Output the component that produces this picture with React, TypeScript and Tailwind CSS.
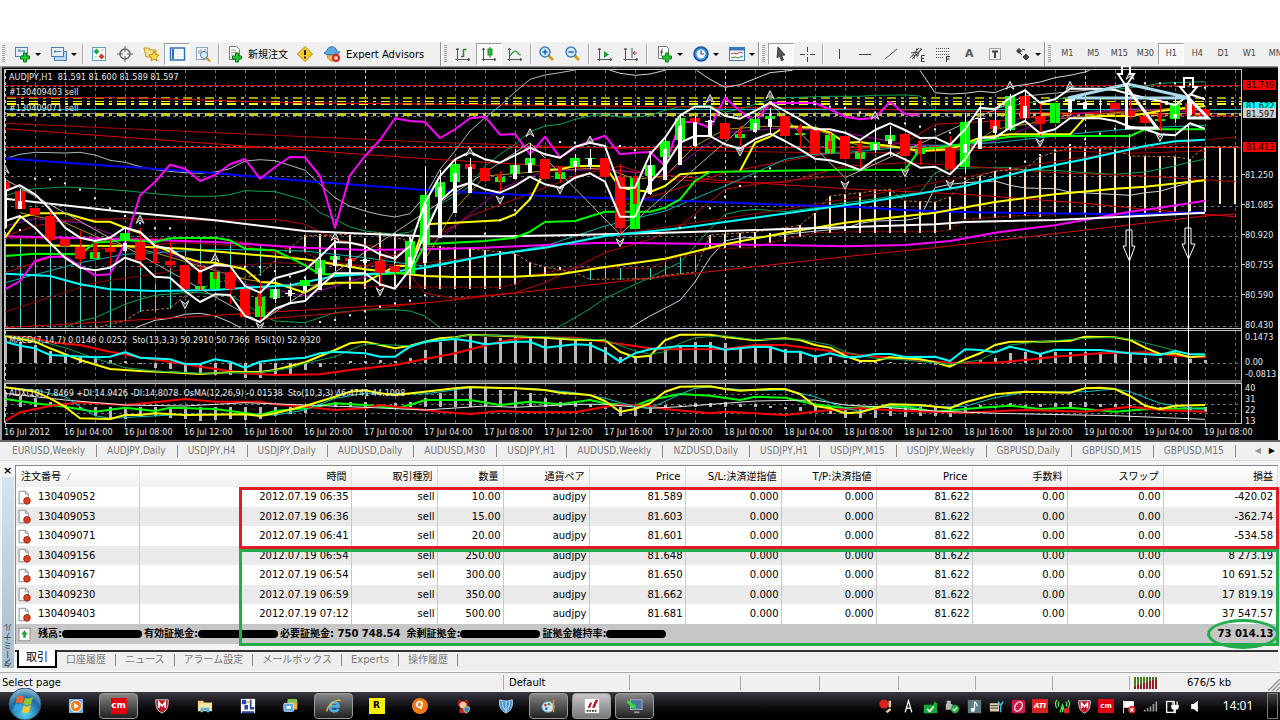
import type { ReactNode } from "react";
import { clsx } from "clsx";

const UI_FONT = "font-['DejaVu_Sans','Noto_Sans_CJK_JP',sans-serif]";
const CHART_FONT = "font-['DejaVu_Sans_Condensed','DejaVu_Sans',sans-serif]";

/* ---------- chart data: "bar,level" pairs, levels in thirds of a pixel ---------- */

const barX = (i: number) => 5 + 15 * i;

function toPoints(data: string) {
  return data
    .trim()
    .split(/\s+/)
    .map((pair) => {
      const [i, y] = pair.split(",").map(Number);
      return `${barX(i).toFixed(1)},${(y / 3).toFixed(1)}`;
    })
    .join(" ");
}

type Series = { c: string; w?: number; dash?: string; d: string };

const BACK_SERIES: Series[] = [
  { c: "#a9bcbc", d: "0.3,274 1,265 2,259 4,261 5,259 6,267 7,283 8,289 9,302 10,311 11,316 12,320 13,322 14,318 15,308 16,285 17,281 18,284 19,298 20,313 21,355 22,395 23,421 24,435 25,446 26,453 27,443 28,390 29,310 30,255 31,195 32,155 33,120 34,78 35,40 36,27 37,20 38,12" },
  { c: "#c9d8d8", d: "40.3,12 41,22 42,28 43,24 44,13" },
  { c: "#c9d8d8", d: "46.1,13 47,40 48,64 49,56 50,38 51,20 52.5,13" },
  { c: "#c9d8d8", d: "61,13 62,80 63,84 64,82 65,76 66,80 67,62 68,56 69,48 70,35 71,28 72,18 72.3,13" },
  { c: "#c9d8d8", d: "8.7,785 10,763 11,757 12,745 13,742 14,750 15,768 15.7,785" },
  { c: "#c9d8d8", d: "41.7,785 43,750 44,727 45,703 46,648 47,575 48,525 49,516 50,514 51,510 53,500 56,487 57,472 58,465 60,463 61,455 62,365 63,355 64,350 66,345 67,358 68,366 70,368 71,378 73,383 75,388 76,380 77,376 78,362 79,350 80,340" },
  { c: "#00a651", d: "0,390 1,375 2,368 4,363 6,368 8,374 10,383 12,391 14,391 15,386 16,374 18,377 20,402 21,440 22,460 23,483 24,495 25,500 26,505 27,498 28,470 29,415 30,390 31,360 32,300 33,265 34,235 35,197 36,180 37,175 38,160 39,150 40,145 41,153 42,153 43,148 44,133 45,122 46,120 47,118 48,138 49,130 50,115 51,100 52,95 55,91 57,91 58,88 60,87 61,90 62,130 63,133 65,131 67,120 68,112 70,100 71,95 73,75 75,65 76,60 77,52 78,50 80,47" },
  { c: "#00a651", d: "4,785 5,765 6,755 7,735 8,715 9,700 10,688 12,680 13,680 15,690 16,712 17,745 18,765 20,770 21,755 22,740 24,732 26,731 27,735 28,750 29,785" },
  { c: "#00a651", d: "36.8,785 38,755 39,728 40,697 42,655 43,635 44,610 45,590 46,540 47,490 48,445 49,435 50,430 52,437 54,425 56,410 57,405 60,385 61,380 62,320 63,308 65,305 67,305 68,312 70,313 72,320 74,325 76,318 78,300 79,288 80,280" },
  { c: "#b00000", d: "0,172 28,228 36,240 44,252 56,262 68,250 75,262 80,255" },
  { c: "#e00000", d: "0,188 16,240 28,278 40,310 48,345 56,368 64,385 72,412 76,430 82,452" },
  { c: "#e00000", d: "0,93 9,96 19,110 36,118 56,128 61,133 70,140 82,150" },
  { c: "#e00000", d: "0,785 28,711 56,572 62,545 80,450 82,444" },
  { c: "#900000", d: "0,738 6,650 12,610 18,590 24,600 28,590 34,560 40,510 46,470 52,430 57,392 62,350 68,300 74,260 80,222 82,213" },
  { c: "#c00000", d: "0,620 3,575 5,557 8,540 12,530 16,540 20,580 24,600 28,530 31,450 34,400 38,330 41,300 44,340 48,350 52,350 56,300 60,290 64,300 70,320 76,330 82,347" },
  { c: "#c00000", d: "0,510 2,480 4,462 8,458 14,463 18,460 20,475 22,520 25,545 26.500,600 28,682 30,697 34,680 36,650 40,560 43,520 45,480 48,370 50,355 54,335 56,330" },
  { c: "#d00000", d: "17,760 22,742 28,710" },
  { c: "#d00000", d: "41,420 44,380 48,320 52,285 55,262 60,230 62,175 66,165 72,140 78,130 80,135" },
  { c: "#d00000", dash: "3 2", d: "0,517 8,517 14,518 18,540 20,560 22,600 24,662 33,664 34,655 35,628 37,612 38,605 43,607 44,585 45,572 46,565 47,548 50,545 51,530 54,500 57,497 62,497 63,492 64,460 67,450 70,446" },
  { c: "#c87830", dash: "3 2", d: "6,785 8,765 9,735 11,727 12,690 14,650 17,625 19,545 20,510 22,507 25,500 28,540 32,553 34,563 35,590 36,603 38,620 39,640 43,638 44,628 46,618 47,507 50,498 53,478 54,440 55,390 57,380 59,370 60,405 62,408 63,392 64,345 66,315 68,310 69,272 71,245 74,250 75,270 78,272 79,280 80,243 82,243" },
  { c: "#b89000", d: "1,440 4,470 7,530 10,560 13,600 16,640 19,660 22,655" },
  { c: "#b89000", d: "28,580 30,430 32,330 36,315 40,305 42,340 44,330 46,240 48,190 51,180 54,190 57,240 60,245 64,250 66,190 70,160 74,140 80,120" },
  { c: "#a000a0", d: "0,480 2,458 5,470 8,520 12,580 14,610 16,655 18,672 20,690 23,645 26,610 28,555 30,480 33,370 36,315 40,310 44,328 46,260 48,200 52,185 56,200 60,235 64,240 66,225 69,170 72,140 75,128 80,140" },
  { c: "#00b4b4", d: "0,650 5,590 8,565 14,550 20,555 24,575 27,595 28,600 36,540 40,480 44,435 48,360 50,320 52,280 54,265 56,260 60,243 66,230 72,200 76,185 80,178" },
];

const FRONT_SERIES: Series[] = [
  { c: "#0000ff", w: 2, d: "0,277 4,290 8,302 13,318 20,345 28,372 36,390 44,403 53,418 57,424 60,432 63,437 68,441 75,445 80,438" },
  { c: "#ff00ff", w: 2, d: "0,511 8,520 14,528 20,545 24,552 28,550 32,545 37,535 40,530 46,533 56,541 60,537 63,525 66,500 70,478 75,437 77,425 80,404" },
  { c: "#ffff00", w: 2, d: "0,538 8,540 12,548 20,580 24,610 28,630 30,633 34,632 37,625 40,603 44,578 48,535 52,500 56,470 62,440 66,408 70,385 74,368 76,362 80,343" },
  { c: "#ffffff", w: 2, d: "0,398 8,438 14,463 20,495 24,503 28,511 33,511 38,507 44,500 50,492 57,482 62,475 64,468 70,462 76,449 80,440" },
  { c: "#ffff00", w: 2, d: "0,515 1,455 2,442 4,442 6,467 7,467 8,485 9,500 10,538 12,575 13,588 14,590 16,610 17,648 18,650 20,680 21,655 22,650 24,650 26,600 27,600 28,475 30,470 33,463 34,445 35,400 36,312 37,310 38,300 40,300 41,365 43,378 44,360 45,325 47,318" },
  { c: "#ffff00", w: 2, d: "49,315 50,230 51,212 52,180 54,185 55,200 56,230 57,228 58,235 59,240 61,255 63,250 65,215 67,205 71,205 72,155 73,150 75,150 77,135 80,120" },
  { c: "#00ff00", w: 2, d: "0,570 2,563 5,565 6,530 8,522 10,528 11,517 14,515 15,523 16,548 18,553 19,575 20,598 21,625 25,625 27,620 28,535 32,525 34,515 35,497 36,468 38,465 40,437 43,437 44,425 45,400 46,345 47,318 56,311 60,312 61,250 63,240 65,225 67,212 69,210 75,210 76,190 80,190" },
  { c: "#00ffff", w: 2, d: "0,623 3,630 5,655 7,670 10,675 14,672 16,665 19,658 22,630 25,622 28,605 32,570 36,545 40,510 45,487 50,455 54,430 57,412 60,390 64,360 68,315 72,280 76,240 78,226 80,221" },
  { c: "#ff00ff", w: 2, d: "0,670 1,645 2,585 3,572 4,572 5,600 6,628 7,625 8,530 9,388 10,348 11,296 12,308 13,345 14,327 15,295 16,279 17,338 18,303 19,273 20,274 21,330 22,485 23,328 24,270 25,222 26,157 27,165 28,168 29,216 30,190 31,157 32,152 33,206 34,204 35,265 36,212 37,275 38,245 39,225 40,209 41,265 42,260 43,258 44,300 45,168 46,168 47,185 48,95 49,135 50,170 51,110 54,111 55,130 56,152 57,160 58,155 59,107 60,145 61,146" },
  { c: "#b8b0a8", d: "0,340 17,768 35,230 41,505 51,110 56,335 68,90 75,60" },
];

const BAND_SERIES: Series[] = [
  { c: "#ffffff", w: 2, d: "0,375 1,358 2,385 3,430 4,485 5,515 6,525 7,515 8,485 9,497 10,540 11,548 12,580 13,617 14,597 15,600 16,660 17,680 18,637 19,625 20,612 21,572 22,528 23,530 24,540 25,565 26,578 27,540 28,410 29,330 30,280 31,258 32,280 33,290 34,268 35,245 36,265 37,275 38,242 39,230 40,240 41,365 42,365 43,265 44,215 45,148 46,122 47,122 48,150 49,158 50,135 51,110 52,135 53,160 54,190 55,190 56,200 57,222 58,192 59,172 60,192 61,216 62,215 63,236 64,190 65,125 66,130 67,95 68,73 69,110 70,100 71,68 73,68 74,72 75,85 76,95 77,105 78,118 79,85 80,100" },
  { c: "#ffffff", w: 2, d: "0,465 1,450 2,485 4,575 5,605 6,613 7,605 8,575 9,590 10,632 11,635 12,675 13,708 14,685 15,687 16,750 17,768 18,728 19,712 20,705 21,662 22,622 24,622 25,655 26,668 27,610 28,500 29,405 30,365 31,350 32,370 33,380 34,360 35,332 36,355 37,365 38,335 39,322 40,347 41,452 42,452 43,350 44,300 45,230 46,210 47,210 48,235 49,248 50,220 51,203 52,225 53,250 54,278 55,283 56,295 57,312 58,280 59,260 60,280 61,305 62,302 63,325 64,280 65,215 66,215 67,185 68,165 69,202 70,190 71,157 73,157 74,165 75,182 76,190 77,205 78,208 79,172 80,188" },
];

const SUB_SERIES: Series[] = [
  { c: "#ff0000", w: 2, d: "0,32 2,40 3,52 5,60 7,80 9,97 11,110 13,125 15,138 16,145 18,150 21,148 23,135 26,120 28,102 30,85 33,50 35,36 38,38 40,50 43,70 44,73 48,72 50,60 52,60 55,78 57,90 60,103 63,113 66,113 68,105 70,95 73,85 76,82 78,92 80,97" },
  { c: "#ffff00", w: 2, d: "0,33 2,50 3,70 5,105 7,132 9,138 11,142 13,147 15,142 17,141 18,135 20,112 22,75 23,55 24,50 25,60 26,70 27,62 28,50 29,40 30,37 31,29 33,32 36,38 38,44 40,46 41,80 42,97 43,92 44,46 45,29 47,29 48,36 50,46 52,40 53,45 54,60 55,68 56,92 57,108 58,108 59,97 61,103 62,112 63,125 64,103 65,85 66,60 67,50 69,50 71,47 72,35 74,37 75,45 76,68 77,87 78,85 79,97 80,92" },
  { c: "#00a651", d: "0,30 2,45 4,68 6,100 8,128 10,138 13,145 17,142 19,130 20,115 22,95 23,75 24,57 27,62 29,45 31,30 36,35 40,45 42,78 43,88 44,80 45,55 46,38 48,32 50,44 52,42 53,42 55,60 56,80 57,92 58,100 60,105 63,118 65,105 67,60 69,50 72,40 74,37 75,42 77,65 79,88 80,92" },
  { c: "#00ffff", w: 2, d: "0,50 1,62 2,70 3,90 6,97 7,95 8,82 9,98 11,103 12,117 13,117 14,103 15,110 16,128 17,110 18,104 20,98 21,85 22,80 24,85 25,95 26,95 27,65 28,50 30,42 31,48 32,58 34,50 35,50 36,68 38,58 39,60 40,80 41,110 42,85 43,73 45,63 47,63 48,74 50,65 51,66 52,80 53,80 54,95 55,85 56,97 57,95 58,87 59,87 60,96 62,95 63,108 64,73 65,75 66,82 67,65 68,75 69,87 70,74 73,75 75,85 77,90 78,78 79,88 80,88" },
  { c: "#00ff00", w: 2, d: "0,222 2,235 4,245 6,260 8,248 10,258 11,248 14,252 17,270 18,258 20,250 22,235 24,240 26,250 27,240 28,225 31,225 33,240 35,230 37,238 39,225 40,235 42,242 43,225 45,207 47,212 49,225 50,215 52,218 54,238 56,250 58,245 60,245 62,260 65,248 67,242 69,252 71,248 74,260 76,253 80,250" },
  { c: "#ff0000", w: 2, d: "0,288 1,262 3,243 5,232 8,240 10,232 12,222 14,230 17,230 18,238 20,245 22,255 24,250 25,240 28,255 29,260 31,267 33,258 35,262 38,262 40,245 41,240 43,243 44,252 47,265 48,260 52,270 55,255 57,250 60,258 64,263 68,255 72,260 75,245 77,255 80,260" },
  { c: "#e8e8e8", d: "0,205 4,225 8,240 12,243 16,233 20,240 24,247 28,255 32,243 34,247 38,238 40,238 43,250 45,245 50,228 54,225 56,240 58,245 62,258 66,265 74,272 80,283" },
  { c: "#00c8c8", d: "0,187 2,195 4,215 5,245 6,272 7,280 9,275 12,268 15,268 18,270 20,255 22,220 24,205 28,207 31,188 35,190 38,203 40,220 42,245 43,250 45,208 46,190 47,186 50,197 52,195 54,215 56,250 57,258 59,242 63,245 64,244 66,218 68,202 72,200 74,192 75,200 77,235 79,250 80,253" },
  { c: "#ffff00", w: 2, d: "0,187 1,193 2,200 3,220 4,245 5,280 7,282 8,270 9,270 10,265 12,270 16,268 17,273 18,265 20,243 22,215 23,200 24,196 25,205 26,210 28,200 30,190 31,186 34,190 36,195 37,203 39,210 40,228 41,260 42,252 43,235 44,200 45,185 47,184 48,192 49,197 51,192 52,192 53,207 54,243 55,250 56,265 57,262 59,238 61,240 63,250 64,232 65,220 66,208 68,200 71,203 72,190 73,188 74,192 75,213 76,242 77,253 78,242 80,240" },
];

const MACD_BARS = [40, 50, 60, 78, 88, 95, 97, 105, 108, 118, 128, 132, 140, 145, 150, 150, 160, 160, 152, 148, 135, 127, 118, 109, 107, 106, 108, 100, 75, 52, 45, 30, 35, 40, 35, 32, 35, 42, 43, 52, 65, 95, 100, 93, 68, 60, 52, 50, 55, 62, 62, 62, 72, 80, 90, 95, 105, 108, 110, 110, 117, 118, 120, 122, 118, 105, 98, 85, 80, 85, 82, 80, 80, 82, 82, 85, 98, 100, 98, 102, 105];
const OSMA_BARS = [200, 212, 218, 232, 238, 250, 272, 278, 282, 275, 272, 278, 282, 287, 285, 283, 285, 283, 272, 268, 265, 238, 232, 232, 230, 236, 235, 230, 218, 205, 192, 188, 190, 195, 198, 205, 220, 230, 228, 237, 250, 272, 272, 265, 240, 240, 235, 235, 232, 236, 238, 242, 248, 258, 262, 268, 278, 280, 278, 273, 275, 272, 272, 275, 262, 240, 243, 233, 240, 237, 235, 232, 232, 237, 236, 240, 240, 249, 253, 255, 262];

// [bar, top, bottom]
const CLOUD_AQUA = [
  [0, 515, 785], [1, 515, 785], [2, 517, 785], [3, 517, 785], [4, 517, 785], [5, 517, 785], [6, 517, 785], [7, 517, 785], [8, 517, 765],
  [9, 517, 738], [10, 517, 738], [11, 517, 728], [12, 517, 600], [13, 517, 600], [14, 520, 600], [15, 523, 600], [16, 525, 605], [17, 535, 630], [18, 555, 630],
  [38, 610, 622], [39, 607, 642], [40, 605, 640], [41, 605, 642], [42, 605, 640], [43, 607, 642], [44, 587, 628], [45, 570, 625], [46, 567, 618],
];
const CLOUD_WHEAT = [
  [19, 540, 562], [20, 508, 562], [21, 505, 600], [22, 508, 600], [23, 508, 668], [24, 515, 668], [25, 500, 660], [26, 500, 668], [27, 512, 668],
  [28, 540, 668], [29, 540, 668], [30, 542, 668], [31, 548, 668], [32, 553, 668], [33, 555, 668], [34, 563, 658], [35, 587, 628], [36, 603, 628], [37, 603, 612],
  [47, 507, 548], [48, 505, 545], [49, 500, 545], [50, 498, 545], [51, 500, 530], [52, 490, 528], [53, 478, 512], [54, 440, 500], [55, 390, 500], [56, 385, 495],
  [57, 380, 500], [58, 370, 500], [59, 370, 500], [60, 405, 502], [61, 405, 502], [62, 408, 502], [63, 392, 492], [64, 345, 460], [65, 335, 460], [66, 315, 455],
  [67, 318, 455], [68, 310, 450], [69, 272, 452], [70, 262, 442], [71, 245, 442], [72, 245, 442], [73, 250, 442], [74, 250, 442], [75, 270, 437], [76, 270, 440],
  [77, 270, 440], [78, 272, 440], [79, 280, 440], [80, 243, 437], [81, 245, 415], [82, 245, 415],
];

type Candle = [number, number, number, number, number, "r" | "g" | "w", number?, number?, ("r" | "w")?];

// [bar, high, low, body top, body bottom, colour, inner top, inner bottom, inner colour]
const CANDLES: Candle[] = [
  [0, 340, 485, 348, 372, "r", 372, 485, "w"], [1, 370, 430, 376, 430, "r", 405, 428, "w"], [2, 415, 480, 425, 447, "r"], [3, 430, 530, 450, 523, "r"],
  [4, 462, 560, 520, 540, "r"], [5, 495, 590, 543, 578, "r"], [6, 525, 610, 558, 578, "g", 530, 575, "r"], [7, 510, 600, 545, 558, "r"],
  [8, 480, 560, 500, 525, "g", 532, 555, "w"], [9, 487, 605, 527, 583, "r"], [10, 530, 653, 587, 590, "r", 545, 590, "r"], [11, 525, 610, 585, 597, "r"],
  [12, 570, 698, 598, 670, "r"], [13, 600, 672, 660, 670, "g", 610, 653, "r"], [14, 612, 670, 618, 668, "g", 618, 640, "r"], [15, 610, 715, 618, 670, "r"],
  [16, 620, 768, 668, 752, "r"], [17, 645, 768, 693, 752, "g", 680, 720, "r"], [18, 640, 710, 668, 697, "g", 668, 700, "w"], [19, 650, 712, 682, 684, "w", 673, 690, "w"],
  [20, 630, 700, 643, 660, "g", 660, 676, "w"], [21, 560, 672, 582, 625, "g", 605, 672, "w"], [22, 530, 615, 570, 582, "g", 570, 600, "w"], [23, 545, 620, 575, 585, "r", 578, 605, "w"],
  [24, 545, 605, 583, 586, "w", 580, 592, "w"], [25, 570, 655, 585, 620, "r"], [26, 590, 630, 600, 618, "r"], [27, 520, 630, 525, 625, "g", 573, 602, "w"],
  [28, 300, 590, 387, 535, "g", 415, 590, "w"], [29, 312, 515, 348, 393, "g", 362, 515, "w"], [30, 280, 440, 293, 347, "g", 322, 440, "w"], [31, 275, 380, 295, 310, "r", 302, 380, "w"],
  [32, 290, 352, 305, 345, "r"], [33, 315, 378, 332, 347, "g", 325, 345, "r"], [34, 250, 340, 297, 325, "g", 297, 338, "w"], [35, 232, 322, 277, 297, "g", 290, 322, "w"],
  [36, 250, 342, 278, 340, "r"], [37, 300, 352, 318, 340, "g", 302, 325, "r"], [38, 265, 318, 275, 303, "g", 285, 303, "w"], [39, 250, 308, 275, 279, "g", 275, 303, "w"],
  [40, 262, 350, 275, 332, "r"], [41, 295, 505, 333, 487, "r"], [42, 325, 495, 335, 490, "g", 330, 415, "r"], [43, 265, 387, 298, 330, "g", 298, 385, "w"],
  [44, 212, 342, 225, 272, "g", 250, 342, "w"], [45, 148, 298, 157, 222, "g", 180, 298, "w"], [46, 150, 242, 157, 167, "r", 167, 240, "w"], [47, 120, 212, 165, 168, "w", 162, 212, "w"],
  [48, 155, 232, 170, 218, "r"], [49, 180, 240, 205, 215, "g", 195, 212, "r"], [50, 140, 200, 160, 193, "g", 172, 198, "w"], [51, 125, 205, 150, 160, "g", 158, 182, "w"],
  [52, 140, 212, 150, 210, "r"], [53, 175, 242, 202, 206, "g", 180, 203, "r"], [54, 185, 268, 192, 265, "r"], [55, 200, 265, 208, 262, "g", 225, 250, "r"],
  [56, 205, 338, 210, 280, "r"], [57, 225, 305, 258, 280, "g", 235, 260, "r"], [58, 175, 260, 227, 252, "g", 235, 252, "w"], [59, 180, 270, 207, 225, "g", 220, 235, "w"],
  [60, 200, 300, 203, 270, "r"], [61, 220, 297, 248, 265, "g", 225, 265, "r"], [62, 205, 290, 240, 243, "r"], [63, 210, 325, 245, 308, "r"],
  [64, 143, 320, 168, 303, "g", 235, 262, "w"], [65, 108, 250, 155, 158, "w", 155, 248, "w"], [66, 130, 215, 162, 188, "r", 180, 202, "w"], [67, 85, 195, 90, 192, "g", 120, 190, "w"],
  [68, 72, 165, 90, 155, "r", 120, 155, "w"], [69, 110, 210, 150, 175, "r"], [70, 95, 172, 110, 170, "g"], [71, 90, 140, 100, 104, "w", 95, 138, "w"],
  [72, 100, 132, 112, 116, "w", 108, 130, "w"], [73, 95, 140, 116, 118, "w"], [74, 105, 158, 112, 128, "r"], [75, 70, 160, 135, 150, "r"],
  [76, 125, 197, 150, 170, "r"], [77, 100, 195, 158, 166, "g", 140, 168, "r"], [78, 98, 170, 110, 158, "g", 145, 155, "w"], [79, 95, 150, 112, 145, "r", 100, 148, "w"], [80, 128, 152, 130, 147, "r"],
];

const CANDLE_FILL = { r: "#ff0000", g: "#00ff00", w: "#ffffff" };

const SAR = "1,492 2,338 3,340 4,352 5,371 6,397 7,427 8,450 9,472 10,487 11,487 14,570 16,603 17,603 18,615 19,632 20,635 21,768 22,762 23,748 24,736 25,722 26,712 27,704 28,688 29,637 30,597 31,550 32,503 33,463 34,433 35,396 37,228 38,230 40,240 41,240 42,253 43,258 45,485 46,455 47,427 48,392 49,360 50,332 51,307 54,115 55,122 56,126 57,139 60,172 61,182 62,190 63,200 64,338 65,332 66,318 67,307 68,287 69,267 70,253 71,237 72,220 73,203 74,188 76,52 77,52 78,52 79,55 80,65";
const UP_FRACTALS = "0,310 9,460 14,575 22,512 31,257 35,200 39,222 47,98 51,86 58,148 67,58 71,58 75,28";
const DOWN_FRACTALS = "12,716 17,782 25,677 33,402 37,372 41,530 49,258 56,358 60,320 63,355 69,230 77,215";

const TIME_LABELS = [
  "16 Jul 2012", "16 Jul 04:00", "16 Jul 08:00", "16 Jul 12:00", "16 Jul 16:00", "16 Jul 20:00", "17 Jul 00:00",
  "17 Jul 04:00", "17 Jul 08:00", "17 Jul 12:00", "17 Jul 16:00", "17 Jul 20:00", "18 Jul 00:00", "18 Jul 04:00",
  "18 Jul 08:00", "18 Jul 12:00", "18 Jul 16:00", "18 Jul 20:00", "19 Jul 00:00", "19 Jul 04:00", "19 Jul 08:00",
];

const PRICE_LABELS: [string, number][] = [
  ["81.250", 112], ["81.085", 142], ["80.920", 172], ["80.755", 202], ["80.590", 232], ["80.430", 262],
  ["0.1473", 274], ["0.00", 299], ["-0.0813", 311], ["40", 325], ["31", 336], ["22", 347], ["13", 358],
];

function Lines({ series }: { series: Series[] }) {
  return (
    <>
      {series.map((s, n) => (
        <polyline key={n} points={toPoints(s.d)} fill="none" stroke={s.c} strokeWidth={s.w ?? 1} strokeDasharray={s.dash} strokeLinejoin="round" />
      ))}
    </>
  );
}

function Marks({ data, render }: { data: string; render: (x: number, y: number) => ReactNode }) {
  return (
    <>
      {data.split(" ").map((pair) => {
        const [i, y] = pair.split(",").map(Number);
        return <g key={pair}>{render(barX(i), y / 3)}</g>;
      })}
    </>
  );
}

function Chart() {
  const columns = Array.from({ length: 42 }, (_, n) => barX(n * 2));
  return (
    <svg viewBox="0 0 1280 374" className={clsx("block w-full bg-black", CHART_FONT)} role="img" aria-label="AUDJPY,H1">
      <defs>
        <clipPath id="plot">
          <rect x="5" y="4" width="1236" height="258" />
        </clipPath>
      </defs>

      <g stroke="#667688" strokeDasharray="3 3" shapeRendering="crispEdges">
        {[61, 151, 241, 331, 421, 511, 601, 691, 781, 891, 984, 1013, 1041].map((y) => (
          <line key={y} x1="5" x2="1241" y1={Math.round(y / 3) + 0.5} y2={Math.round(y / 3) + 0.5} />
        ))}
        {columns.map((x, n) => (
          <g key={x} stroke={n % 12 === 0 ? "#d0d0d0" : "#5a6878"}>
            <line x1={x + 0.5} x2={x + 0.5} y1="4" y2="262" />
            <line x1={x + 0.5} x2={x + 0.5} y1="265" y2="315" />
            <line x1={x + 0.5} x2={x + 0.5} y1="318" y2="357" />
          </g>
        ))}
      </g>

      <g clipPath="url(#plot)">
        <g shapeRendering="crispEdges">
          <line x1="5" x2="1241" y1="19.5" y2="19.5" stroke="#d00000" />
          <line x1="5" x2="1241" y1="81.5" y2="81.5" stroke="#ff0000" />
          <line x1="5" x2="1241" y1="43.5" y2="43.5" stroke="#00c0c8" />
          <line x1="5" x2="1241" y1="47.5" y2="47.5" stroke="#778899" />
          <g strokeDasharray="9 5 3 5">
            <line x1="7" x2="1241" y1="32" y2="32" stroke="#a0a000" strokeWidth="2" />
            <line x1="7" x2="1241" y1="35.5" y2="35.5" stroke="#ffff00" />
            <line x1="7" x2="1241" y1="38" y2="38" stroke="#ffff00" strokeWidth="2" />
            <line x1="7" x2="1241" y1="48" y2="48" stroke="#c8c820" strokeWidth="3" />
          </g>
        </g>
        <g shapeRendering="crispEdges">
          {CLOUD_AQUA.map(([i, a, b]) => (
            <line key={i} x1={barX(i)} x2={barX(i)} y1={a / 3} y2={b / 3} stroke="#40e0d8" />
          ))}
          {CLOUD_WHEAT.map(([i, a, b]) => (
            <line key={i} x1={barX(i)} x2={barX(i)} y1={a / 3} y2={b / 3} stroke="#ffe4c4" strokeWidth="2" />
          ))}
        </g>
        <Lines series={BACK_SERIES} />
        <Lines series={FRONT_SERIES} />
        <g shapeRendering="crispEdges">
          {CANDLES.map(([i, hi, lo, top, bottom, color, innerTop, innerBottom, inner]) => (
            <g key={i}>
              <rect x={barX(i) - 5} y={top / 3} width="10" height={(bottom - top) / 3} fill={CANDLE_FILL[color]} />
              <rect x={barX(i)} y={hi / 3} width="1" height={(lo - hi) / 3} fill={inner === "w" || color === "w" ? "#fff" : "#f00"} />
              {inner && innerTop && innerBottom && (
                <rect x={barX(i) - 2} y={innerTop / 3} width="4" height={(innerBottom - innerTop) / 3} fill={CANDLE_FILL[inner]} />
              )}
            </g>
          ))}
        </g>
        <Lines series={BAND_SERIES} />
        <Marks data={SAR} render={(x, y) => <rect x={x - 1} y={y - 1} width="2" height="2" fill="#d8ffff" />} />
        <Marks data={UP_FRACTALS} render={(x, y) => <path d={`M${x} ${y - 4}l4 8-4-3-4 3z`} fill="#555" stroke="#e8e8e8" strokeWidth="1" />} />
        <Marks data={DOWN_FRACTALS} render={(x, y) => <path d={`M${x} ${y + 4}l4-8-4 3-4-3z`} fill="#555" stroke="#e8e8e8" strokeWidth="1" />} />
      </g>

      <g transform="translate(0 259)">
        <g shapeRendering="crispEdges" fill="#b8b8b8">
          {MACD_BARS.map((v, i) => (
            <rect key={i} x={barX(i) - 1} y={Math.min(v, 114) / 3} width="3" height={Math.max(Math.abs(v - 114) / 3, 1)} />
          ))}
          {OSMA_BARS.map((v, i) => (
            <rect key={i} x={barX(i) - 1} y={Math.min(v, 246) / 3} width="3" height={Math.max(Math.abs(v - 246) / 3, 2)} />
          ))}
        </g>
        <Lines series={SUB_SERIES} />
      </g>

      {/* window frame and pane splitters */}
      <g shapeRendering="crispEdges" fill="none" stroke="#c8ccc8">
        <rect x="0" y="0" width="1280" height="1" fill="#909090" stroke="none" />
        <rect x="0" y="1" width="1280" height="1" fill="#484848" stroke="none" />
        <rect x="0" y="0" width="2" height="374" fill="#a0a0a0" stroke="none" />
        <rect x="1278" y="0" width="2" height="374" fill="#f0f0f0" stroke="none" />
        <path d="M4.5 356.5V3.5H1241.5V357.5H4.5M4.5 262.5H1241.5M4.5 264.5H1241.5M4.5 317.5H1241.5" />
        <rect x="4" y="314" width="1238" height="3" fill="#707070" stroke="none" />
        {TIME_LABELS.map((t, n) => (
          <line key={t} x1={5.5 + n * 60} x2={5.5 + n * 60} y1="357" y2="361" />
        ))}
        {[112, 142, 172, 202, 232].map((y) => (
          <line key={y} x1="1241" x2="1245" y1={y - 3.5} y2={y - 3.5} />
        ))}
      </g>

      <g fill="#e8e8e8" fontSize="9">
        <text x="9" y="14" xmlSpace="preserve">AUDJPY,H1  81.591 81.600 81.589 81.597</text>
        <text x="9" y="29">#130409403 sell</text>
        <text x="9" y="45">#130409071 sell</text>
        <text x="9" y="277" xmlSpace="preserve">MACD(7,14,7) 0.0146 0.0252  Sto(13,3,3) 50.2910 50.7366  RSI(10) 52.9320</text>
        <text x="9" y="330" xmlSpace="preserve">ADX(10) 7.8469 +DI:14.9426 -DI:14.8078  OsMA(12,26,9) -0.01538  Sto(10,3,3) 46.4741 44.1098</text>
        {TIME_LABELS.map((t, n) => (
          <text key={t} x={4 + n * 60} y="369">{t}</text>
        ))}
        {PRICE_LABELS.map(([t, y]) => (
          <text key={t} x="1245" y={y}>{t}</text>
        ))}
      </g>
      <g fontSize="9">
        <rect x="1243" y="14" width="33" height="10" fill="#ff0000" />
        <text x="1246" y="22">81.749</text>
        <rect x="1243" y="36" width="33" height="10" fill="#00ffff" />
        <text x="1246" y="43">81.622</text>
        <rect x="1243" y="42" width="33" height="10" fill="#d0d0d0" />
        <text x="1246" y="51">81.597</text>
        <rect x="1243" y="76" width="33" height="10" fill="#ff0000" />
        <text x="1246" y="84">81.413</text>
      </g>

      {/* hand-drawn annotations */}
      <g fill="none" stroke="#fff">
        <path d="M1068 32L1128 18L1190 32Z" stroke="#a8dcf0" strokeWidth="3" />
        <path d="M1126.500 21V62H1157ZM1188.500 32V52H1208Z" strokeWidth="3" />
        <path d="M1122 0V8H1118L1126 20L1134 8H1130V0ZM1184 12V21H1180L1188.500 31L1197 21H1193V12Z" strokeWidth="2" />
        <path d="M1129.500 68V355M1188.500 60V355" />
        <path d="M1126 164H1132V180H1135L1129.500 195L1123 180H1126ZM1185 162H1191V178H1195L1188.500 193L1182 178H1185Z" />
      </g>
    </svg>
  );
}

/* ---------- toolbar ---------- */

function Svg({ children, size = 18 }: { children: ReactNode; size?: number }) {
  return (
    <svg viewBox="0 0 18 18" width={size} height={size} className="shrink-0" fill="none" aria-hidden>
      {children}
    </svg>
  );
}

const plus = <path d="M9.500 8h3v3h3v3h-3v3h-3v-3h-3v-3h3z" fill="#22c832" stroke="#0a7a18" />;
const axes = <path d="M3.500 3v13M1.500 14.500H16M2 5l1.500-2L5 5M14 13l2 1.500L14 16" stroke="#555" />;
const zoomGlass = (
  <>
    <path d="M10 10l5 5" stroke="#d0a020" strokeWidth="3" />
    <circle cx="7" cy="7" r="5" fill="#cfe8fb" stroke="#3a80c0" strokeWidth="1.500" />
  </>
);

const icons: Record<string, ReactNode> = {
  newChart: <><rect x="1.500" y="2.500" width="12" height="9" fill="#e4f0fa" stroke="#4a80b0" /><path d="M4 6h7M5 4v3M10 5v3" stroke="#4a80b0" />{plus}</>,
  profiles: <><rect x="4.500" y="6.500" width="12" height="9" fill="#bcd8f0" stroke="#4a80b0" /><rect x="1.500" y="2.500" width="12" height="9" fill="#e4f0fa" stroke="#4a80b0" /><path d="M4 6.500h7M5 5v3" stroke="#4a80b0" /></>,
  market: <><rect x="2.500" y="2.500" width="13" height="13" fill="#fff" stroke="#5aa0c8" /><path d="M6.500 3.500L9.500 6.500 6.500 9.500 3.500 6.500z" fill="#20a838" /><path d="M11.500 8.500l3 3-3 3-3-3z" fill="#e03820" /><path d="M11 5h3M4 12h3" stroke="#bbb" /></>,
  crosshairWin: <><circle cx="9" cy="9" r="5" stroke="#666" strokeWidth="1.500" /><path d="M9 1v6M9 11v6M1 9h6M11 9h6" stroke="#666" /></>,
  navigator: <><path d="M2 3h5l1 2h6v7H4z" fill="#f8e090" stroke="#c89820" /><path d="M12 6l1.500 3.500 3.500.5-2.500 2.500.5 3.500-3-2-3 2 .5-3.500L7 10l3.500-.5z" fill="#ffd840" stroke="#c08a10" /></>,
  terminal: <><rect x="2.500" y="3" width="14" height="12" fill="#fff" stroke="#3070b8" strokeWidth="1.500" /><path d="M5 4v10" stroke="#3070b8" strokeWidth="2" /><path d="M8 6h6M8 9h6M8 12h6" stroke="#d8e4f0" /></>,
  tester: <><rect x="2.500" y="2.500" width="11" height="12" fill="#f4f8fc" stroke="#8aa4bc" /><path d="M5 5v4M7 4v5M9 6v4M11 4v3" stroke="#8090a0" /><circle cx="10" cy="10" r="3.500" fill="#d8ecfa" stroke="#4a80b0" /><path d="M12.500 12.500l3.500 4" stroke="#d0a020" strokeWidth="2" /></>,
  order: <><path d="M3.500 1.500h7l3 3v10h-10z" fill="#fff" stroke="#777" /><path d="M5 5h5M5 7.500h6M5 10h3" stroke="#999" />{plus}</>,
  warning: <><path d="M9 1.500L16.500 9 9 16.500 1.500 9z" fill="#f8c828" stroke="#b88808" /><path d="M9 5v5" stroke="#222" strokeWidth="2" /><path d="M8 11.500h2v2H8z" fill="#222" /></>,
  expert: <><path d="M4 9c0 5 3 7 6 7s5-3 5-7z" fill="#e8b858" stroke="#b88020" /><path d="M1 8c2-1 3-2 3.500-4C7 1 11 1 13 4c.5 2 2 3 4 3-3 3-12 4-16 1z" fill="#60a8e0" stroke="#2c70b0" /><circle cx="13" cy="13" r="4" fill="#e02818" /><path d="M11.500 11.500h3v3h-3z" fill="#fff" /></>,
  bars: <>{axes}<path d="M9.500 4v8M9.500 4.500h3M7 11.500h2.500" stroke="#1c8c28" strokeWidth="1.500" /></>,
  candles: <>{axes}<path d="M10 2v11" stroke="#1c8c28" /><rect x="8" y="4" width="4" height="6" fill="#30b840" stroke="#1c8c28" /></>,
  lineChart: <>{axes}<path d="M4 11c3-5 5-6 7-4s2 3 4 3" stroke="#30a040" strokeWidth="1.200" /></>,
  zoomIn: <>{zoomGlass}<path d="M4.500 7h5M7 4.500v5" stroke="#2060a8" strokeWidth="1.500" /></>,
  zoomOut: <>{zoomGlass}<path d="M4.500 7h5" stroke="#2060a8" strokeWidth="1.500" /></>,
  autoScroll: <>{axes}<path d="M8 6l5 3.500L8 13z" fill="#20a030" /></>,
  shift: <>{axes}<path d="M10 3v10" stroke="#355e90" /><path d="M15 8h-4M13 6l-2 2 2 2" stroke="#c83820" /></>,
  indicators: <><path d="M2.500 1.500h8l2 2v10h-10z" fill="#fff" stroke="#777" /><path d="M7 4c-2 0-1 3-2 7M4 7h3" stroke="#444" />{plus}</>,
  periods: <><circle cx="9" cy="9" r="7" fill="#3c8ce0" stroke="#1850a0" strokeWidth="1.500" /><circle cx="9" cy="9" r="4.500" fill="#eef6ff" /><path d="M9 5.500V9h3" stroke="#204080" /></>,
  templates: <><rect x="1.500" y="2.500" width="15" height="13" fill="#fff" stroke="#3878b8" /><path d="M1.500 4h15" stroke="#3878b8" strokeWidth="3" /><path d="M3 9l3-1 3 1 3-2 3 1" stroke="#c04030" /><path d="M3 13l4-1 3 1 5-2" stroke="#30904a" /></>,
  cursor: <path d="M6 2l7 8-3.500.3 2 4.500-2 1-2-4.700L5 13z" fill="#555" stroke="#444" />,
  crosshair: <path d="M9.500 2v5M9.500 12v5M2 9.500h5M12 9.500h5M9 9.500h1" stroke="#444" />,
  vline: <path d="M9.500 4v10" stroke="#444" />,
  hline: <path d="M3 9.500h12" stroke="#444" />,
  trend: <path d="M3 14L15 4" stroke="#444" />,
  channel: <><path d="M2 13L11 3M4 14L14 4M3 8l8-1M4 11l7-1M6 14L9 3M9 12l4-9" stroke="#555" /><path d="M16.500 10.500h-3v6h3M13.500 13.500h2.500" stroke="#333" /></>,
  fibo: <><path d="M2 3.500h13M2 6.500h13M2 9.500h13M2 12.500h8" stroke="#555" strokeDasharray="1 1" /><path d="M16 11.500h-3.500V17M12.500 14h3" stroke="#333" /></>,
  label: <><rect x="3.500" y="3.500" width="11" height="11" stroke="#555" strokeDasharray="1 1" /><path d="M6 6.500h6M9 6.500V13" stroke="#444" strokeWidth="2" /></>,
  arrows: <><path d="M5 3l3 3-3 3-3-3z" fill="#444" /><path d="M6 8l2 2M12 9l3 3-3 3-3-3z" fill="#444" stroke="#444" /><path d="M8 4l3 1" stroke="#444" /></>,
};

function ToolButton({ name, label, active, caret }: { name: string; label: string; active?: boolean; caret?: boolean }) {
  return (
    <button
      type="button"
      aria-label={label}
      className={clsx(
        "flex h-[22px] shrink-0 items-center justify-center",
        caret ? "w-9" : "w-[26px]",
        active && "border border-t-[#a0a0a0] border-r-white border-b-white border-l-[#a0a0a0] bg-[#f8f8f8]"
      )}
    >
      <span className="flex w-6 justify-center">
        <Svg>{icons[name]}</Svg>
      </span>
      {caret && <span className="h-0 w-0 border-x-[3px] border-t-[3px] border-x-transparent border-t-black" />}
    </button>
  );
}

const Sep = () => <span className="mx-[2px] h-5 w-[2px] shrink-0 border-l border-[#a8a8a8] bg-white" />;
const Grip = () => <span className="mr-[3px] ml-[2px] h-[18px] w-[3px] shrink-0 bg-[repeating-linear-gradient(#a0a0a0_0_1px,#f0f0f0_1px_2px)]" />;
const GroupEnd = () => <span className="h-6 w-[2px] shrink-0 border-l border-[#909090] bg-white" />;

const PERIODS = ["M1", "M5", "M15", "M30", "H1", "H4", "D1", "W1", "MN"];

function Toolbar() {
  return (
    <div role="toolbar" aria-label="Standard" className="flex h-6 items-center overflow-hidden bg-[#f0f0f0]">
      <Grip />
      <ToolButton name="newChart" label="New chart" caret />
      <ToolButton name="profiles" label="Profiles" caret />
      <Sep />
      <ToolButton name="market" label="Market watch" />
      <ToolButton name="crosshairWin" label="Data window" />
      <ToolButton name="navigator" label="Navigator" />
      <ToolButton name="terminal" label="Terminal" active />
      <ToolButton name="tester" label="Strategy tester" />
      <Sep />
      <button type="button" className="flex shrink-0 items-center pr-1 text-[10px]">
        <span className="flex w-[26px] justify-center"><Svg>{icons.order}</Svg></span>
        新規注文
      </button>
      <ToolButton name="warning" label="MetaEditor" />
      <button type="button" className="flex shrink-0 items-center pr-4 text-[10px]">
        <span className="flex w-7 justify-center"><Svg>{icons.expert}</Svg></span>
        Expert Advisors
      </button>
      <GroupEnd />
      <Grip />
      <ToolButton name="bars" label="Bar chart" />
      <ToolButton name="candles" label="Candlesticks" active />
      <ToolButton name="lineChart" label="Line chart" />
      <Sep />
      <ToolButton name="zoomIn" label="Zoom in" />
      <ToolButton name="zoomOut" label="Zoom out" />
      <Sep />
      <ToolButton name="autoScroll" label="Auto scroll" />
      <ToolButton name="shift" label="Chart shift" />
      <Sep />
      <ToolButton name="indicators" label="Indicators" caret />
      <ToolButton name="periods" label="Periods" caret />
      <ToolButton name="templates" label="Templates" caret />
      <GroupEnd />
      <Grip />
      <ToolButton name="cursor" label="Cursor" active />
      <ToolButton name="crosshair" label="Crosshair" />
      <Sep />
      <ToolButton name="vline" label="Vertical line" />
      <ToolButton name="hline" label="Horizontal line" />
      <ToolButton name="trend" label="Trendline" />
      <ToolButton name="channel" label="Channel" />
      <ToolButton name="fibo" label="Fibonacci" />
      <button type="button" className="w-[26px] shrink-0 text-[11px] font-bold text-[#555]">A</button>
      <ToolButton name="label" label="Text label" />
      <ToolButton name="arrows" label="Arrows" caret />
      <GroupEnd />
      <Grip />
      {PERIODS.map((p) => (
        <button
          key={p}
          type="button"
          className={clsx(
            "h-[22px] w-[26px] shrink-0 text-[9px] text-[#444]",
            CHART_FONT,
            p === "H1" && "border border-t-[#a0a0a0] border-r-white border-b-white border-l-[#a0a0a0] bg-[#f8f8f8]"
          )}
        >
          {p}
        </button>
      ))}
    </div>
  );
}

/* ---------- chart tabs and terminal ---------- */

const CHART_TABS = [
  "EURUSD,Weekly", "AUDJPY,Daily", "USDJPY,H4", "USDJPY,Daily", "AUDUSD,Daily", "AUDUSD,M30", "USDJPY,H1", "AUDUSD,Weekly",
  "NZDUSD,Daily", "USDJPY,H1", "USDJPY,M15", "USDJPY,Weekly", "GBPUSD,Daily", "GBPUSD,M15", "GBPUSD,M15",
];

function ChartTabs() {
  return (
    <nav className="flex h-[21px] items-center overflow-hidden border-t-2 border-b border-t-[#666] border-b-[#d8d8d8] bg-[#f0f0f0] pl-[2px]">
      {CHART_TABS.map((t, n) => (
        <button key={n} type="button" className={clsx("shrink-0 border-r border-[#888] pr-[11px] pl-[10px] text-[10px] leading-3 text-[#777]", CHART_FONT)}>
          {t}
        </button>
      ))}
      <span className="ml-auto flex gap-2 pr-[5px] text-[8px]">
        <button type="button" aria-label="Previous" className="text-[#999]">◀</button>
        <button type="button" aria-label="Next" className="text-black">▶</button>
      </span>
    </nav>
  );
}

const COLUMNS = ["時間", "取引種別", "数量", "通貨ペア", "Price", "S/L:決済逆指値", "T/P:決済指値", "Price", "手数料", "スワップ", "損益"];

const ORDERS = [
  ["130409052", "2012.07.19 06:35", "10.00", "81.589", "-420.02"],
  ["130409053", "2012.07.19 06:36", "15.00", "81.603", "-362.74"],
  ["130409071", "2012.07.19 06:41", "20.00", "81.601", "-534.58"],
  ["130409156", "2012.07.19 06:54", "250.00", "81.648", "8 273.19"],
  ["130409167", "2012.07.19 06:54", "300.00", "81.650", "10 691.52"],
  ["130409230", "2012.07.19 06:59", "350.00", "81.662", "17 819.19"],
  ["130409403", "2012.07.19 07:12", "500.00", "81.681", "37 547.57"],
];

const Redacted = ({ short }: { short?: boolean }) => (
  <span className={clsx("h-2 rounded-full bg-black", short ? "w-[60px]" : "w-20")} />
);

function OrderIcon() {
  return (
    <Svg size={15}>
      <path d="M2.500 1.500h8l3 3v12h-11z" fill="#fff" stroke="#777" />
      <path d="M10 2v3h3" stroke="#777" />
      <circle cx="12" cy="13" r="4" fill="#d84020" stroke="#902010" />
    </Svg>
  );
}

function OrdersTable() {
  return (
    <table className="w-full table-fixed border-collapse bg-white text-right text-[10px] leading-none">
      <colgroup>
        <col className="w-[123px]" />
        <col className="w-[212px]" />
        <col className="w-[86px]" />
        <col className="w-[66px]" />
        <col className="w-[86px]" />
        <col className="w-24" />
        <col className="w-24" />
        <col className="w-[95px]" />
        <col className="w-24" />
        <col className="w-[95px]" />
        <col className="w-24" />
        <col />
      </colgroup>
      <thead>
        <tr className="h-[21px] bg-linear-to-b from-white to-[#f0f0f0]">
          <th scope="col" className="border-r border-[#e0e0e0] pl-[5px] text-left font-normal">
            注文番号 <span className="ml-1 text-[8px] text-[#888]">⁄</span>
          </th>
          {COLUMNS.map((c, n) => (
            <th key={n} scope="col" className="border-r border-[#e0e0e0] pr-1 font-normal whitespace-nowrap">{c}</th>
          ))}
        </tr>
      </thead>
      <tbody>
        {ORDERS.map(([id, time, size, price, profit]) => (
          <tr key={id} className="h-5 even:h-[19px] even:bg-[#eaeaea] [&>td]:border-r [&>td]:border-[#c8c8c8] [&>td]:pr-[2px] [&>td:last-child]:pr-1">
            <td>
              <span className="flex items-center gap-[6px] pl-px">
                <OrderIcon />
                {id}
              </span>
            </td>
            <td>{time}</td>
            <td>sell</td>
            <td>{size}</td>
            <td>audjpy</td>
            <td>{price}</td>
            <td>0.000</td>
            <td>0.000</td>
            <td>81.622</td>
            <td>0.00</td>
            <td>0.00</td>
            <td>{profit}</td>
          </tr>
        ))}
      </tbody>
      <tfoot>
        <tr className="h-5 bg-[#c6c6c6] font-bold">
          <td colSpan={11}>
            <span className="flex items-center pl-px whitespace-nowrap">
              <Svg size={15}>
                <rect x="2.500" y="1.500" width="13" height="15" fill="#fff" stroke="#888" />
                <path d="M9 4l4 5h-2.500v4h-3V9H5z" fill="#20a030" />
              </Svg>
              <span className="ml-[6px]">残高:</span>
              <Redacted />
              <span className="ml-[2px]">有効証拠金:</span>
              <Redacted />
              <span className="ml-[2px]">必要証拠金: 750 748.54</span>
              <span className="ml-[6px]">余剰証拠金:</span>
              <Redacted />
              <span className="ml-[2px]">証拠金維持率:</span>
              <Redacted short />
            </span>
          </td>
          <td className="pr-1">73 014.13</td>
        </tr>
      </tfoot>
    </table>
  );
}

const TERMINAL_TABS = ["口座履歴", "ニュース", "アラーム設定", "メールボックス", "Experts", "操作履歴"];

function Terminal() {
  return (
    <section aria-label="ターミナル" className="flex bg-[#f4f4f4] pt-1">
      <div className="flex w-[15px] shrink-0 flex-col items-center pb-1">
        <button type="button" aria-label="Close" className="text-[11px] leading-3 font-bold">×</button>
        <div className="flex w-3 flex-1 items-start justify-center bg-linear-to-b from-[#d6e4f2] to-[#a8bccc]">
          <span className="mt-auto rotate-180 text-[9px] leading-3 text-[#345] [writing-mode:vertical-rl]">ターミナル</span>
        </div>
      </div>
      <div className="min-w-0 flex-1 pr-[2px]">
        <div className="relative border-t border-l border-[#888]">
          <OrdersTable />
          <div className="pointer-events-none absolute top-[21px] right-[-1px] bottom-[-2px] left-[223px] flex flex-col">
            <div className="h-[62px] border-[3px] border-[#e41b23]" />
            <div className="flex-1 border-[3px] border-[#22ac4c]" />
          </div>
          <div className="pointer-events-none absolute right-[-1px] bottom-[-5px] h-[30px] w-[72px] rounded-[50%] border-[3px] border-[#22ac4c]" />
        </div>
        <div role="tablist" className="mt-[6px] flex h-[22px] items-start border-t-2 border-b border-t-[#333] border-b-white bg-[#efefef] pl-[2px] text-[10px] text-[#777]">
          <button type="button" role="tab" aria-selected className="-mt-[2px] h-[18px] w-10 border-2 border-t-0 border-black bg-white text-[11px] leading-4 text-black">
            取引
          </button>
          {TERMINAL_TABS.map((t) => (
            <button key={t} type="button" role="tab" aria-selected={false} className="mt-[2px] border-r border-[#888] px-[9px] leading-3">
              {t}
            </button>
          ))}
        </div>
      </div>
    </section>
  );
}

function StatusBar() {
  return (
    <footer className="flex h-5 items-center border-t border-[#aaa] bg-[#f0f0f0] text-[10px] [&>span]:border-r [&>span]:border-[#aaa]">
      <span className="flex-1 pl-[2px]">Select page</span>
      <span className="w-[126px] pl-[5px]">Default</span>
      <span className="h-[14px] w-[111px]" />
      <span className="h-[14px] w-[79px]" />
      <span className="h-[14px] w-[79px]" />
      <span className="h-[14px] w-[77px]" />
      <span className="h-[14px] w-[77px]" />
      <span className="h-[14px] w-[77px]" />
      <div className="flex w-[150px] items-center pl-1">
        <svg width="23" height="12" aria-hidden>
          {[0, 1, 2, 3, 4, 5, 6, 7].map((n) => (
            <g key={n}>
              <rect x={n * 3} y="0" width="2" height={9 - n} fill="#4a7a20" />
              <rect x={n * 3} y={9 - n} width="2" height={3 + n} fill="#902020" />
            </g>
          ))}
        </svg>
        <span className="ml-[30px]">676/5 kb</span>
        <svg width="12" height="12" className="mt-1 ml-auto" aria-hidden>
          <path d="M0 12L12 0M4 12L12 4M8 12l4-4" stroke="#999" strokeWidth="1.500" />
        </svg>
      </div>
    </footer>
  );
}

/* ---------- taskbar ---------- */

const mcafee = (
  <>
    <path d="M2 2h14c0 8-1 12-7 15C3 14 2 10 2 2z" fill="#c01828" stroke="#ddd" />
    <path d="M5.500 11V5L9 9l3.500-4v6" stroke="#fff" strokeWidth="2" />
  </>
);

const APPS: { label: string; state?: "open" | "bright"; text?: string; box?: string; icon?: ReactNode }[] = [
  { label: "Media player", icon: <><rect x="1" y="1" width="16" height="16" rx="1" fill="#70b4e8" /><circle cx="9" cy="9" r="6.500" fill="#f08020" stroke="#fff" /><path d="M7 5.500l5 3.500-5 3.500z" fill="#fff" /></> },
  { label: "CM", state: "open", text: "cm", box: "bg-[#e00010] text-white" },
  { label: "McAfee", icon: mcafee },
  { label: "Explorer", icon: <><path d="M1 3h6l1 2h9v10H1z" fill="#f0d078" /><path d="M2 6h14v8H2z" fill="#f8e8a8" /><path d="M4 16v-5h10v5h-3v-2H7v2z" fill="#60b0e0" /></> },
  { label: "Trading tool", icon: <><rect x="1" y="1" width="16" height="16" fill="#fff" /><path d="M2 2h5v5H2zM11 2h2v8h3v3h-5zM5 8h4v5H5zM2 15h14v2H2z" fill="#2848a8" /><path d="M8 3h2v3H8z" fill="#e0c020" /></> },
  { label: "Remote desktop", icon: <><rect x="5" y="1" width="11" height="8" rx="1" fill="#80c050" /><rect x="7" y="5" width="9" height="8" rx="1" fill="#f0b030" /><rect x="1" y="6" width="11" height="9" rx="1" fill="#58a8e8" stroke="#ddf" /><path d="M4 9h5v3H4z" fill="#fff" /></> },
  { label: "Internet Explorer", state: "open", icon: <><path d="M14 12.500c-3 4-9.500 3-9.500-3 0-6 9-6 9.500 0H6" stroke="#48b0f0" strokeWidth="3" /><path d="M1.500 15C-1 11 12 0 16.500 3" stroke="#f0c030" strokeWidth="1.500" /></> },
  { label: "R", text: "R", box: "bg-[#f8f000] text-black" },
  { label: "Q", text: "Q", box: "rounded-full bg-[#f07818] text-white" },
  { label: "Assistant", icon: <><path d="M3 4h12v5H3z" fill="#a01818" /><circle cx="9" cy="8" r="4" fill="#f4c8a0" /><path d="M4 2l3 3M14 2l-3 3" stroke="#c02020" strokeWidth="2" /><path d="M5 12h8v5H5z" fill="#c82028" /><path d="M10 10h6v3c0 2-1 3-3 4-2-1-3-2-3-4z" fill="#3888d8" stroke="#f0d040" /></> },
  { label: "Shield", icon: <><path d="M2 2c5 2 9 2 14 0 1 7-1 12-7 15C3 14 1 9 2 2z" fill="#4890d0" stroke="#c8e0f4" /><path d="M9 3v13M5 4c0 5 1 8 4 10 3-2 4-5 4-10" stroke="#e0f0fc" /></> },
  { label: "Paint", state: "open", icon: <><ellipse cx="8" cy="10" rx="7" ry="6" fill="#c8e4f4" stroke="#6898b8" /><circle cx="5" cy="8" r="1.500" fill="#e03030" /><circle cx="9" cy="7" r="1.500" fill="#30a040" /><circle cx="6" cy="12" r="1.500" fill="#3060d0" /><path d="M14 2v14" stroke="#e08828" strokeWidth="2" /></> },
  { label: "MetaTrader", state: "bright", icon: <><rect x="1" y="1" width="16" height="16" fill="#fff" /><path d="M4 11l3-6h2l-2 6zM9 11l4-9h3l-4 9z" fill="#c01020" /><path d="M3 14.500h12" stroke="#333" strokeWidth="2" strokeDasharray="2 1" /></> },
  { label: "Transfer", state: "open", icon: <><rect x="4" y="2" width="13" height="11" fill="#4878a8" stroke="#aac" /><path d="M8 16h6" stroke="#999" strokeWidth="2" /><path d="M1 2l7 6V4l2 8-8-1 3-1-5-5z" fill="#40d840" /></> },
];

const TRAY: { label: string; text?: string; box?: string; icon?: ReactNode }[] = [
  { label: "Pin", icon: <><circle cx="6" cy="6" r="5.500" fill="#e02020" /><path d="M13 2v8M9 16l5-4" stroke="#e8c890" strokeWidth="3" /></> },
  { label: "Input mode", icon: <path d="M5 16L9 2l4 14M6 11h6" stroke="#fff" strokeWidth="1.500" /> },
  { label: "Backup", icon: <><path d="M1 7h11l2-4 3 2v12H1z" fill="#18a838" /><path d="M5 12l3 3 5-6" stroke="#fff" strokeWidth="2" /></> },
  { label: "USB", icon: <><path d="M2 2h5v4h2v7H1V6h1z" fill="#bbb" /><circle cx="12" cy="12" r="5" fill="#28a838" /><path d="M9.500 12l2 2 3-4" stroke="#fff" strokeWidth="1.500" /></> },
  { label: "Audio manager", icon: <><rect x="1" y="1" width="16" height="16" fill="#5c7c84" /><path d="M9 3v9M9 3c2 3 4 3 3 6" stroke="#fff" strokeWidth="1.500" /><circle cx="7" cy="13" r="2.500" fill="#fff" /></> },
  { label: "Tools", icon: <><path d="M1 5h11v10H1z" fill="#d8c8a8" /><path d="M2 8h9M2 11h9" stroke="#333" /><path d="M14 16V9M11 3l3 5 3-5" stroke="#40b0e0" strokeWidth="2" /></> },
  { label: "Rakuten", icon: <><rect x="1" y="1" width="16" height="16" rx="2" fill="#d01848" /><ellipse cx="9" cy="9" rx="4" ry="6" stroke="#fff" strokeWidth="1.500" transform="rotate(30 9 9)" /></> },
  { label: "ATI", text: "ATI", box: "bg-[#e02020] italic text-white" },
  { label: "Wireless", icon: <><path d="M9 7v9M6 16L9 7l3 9M5 9a5 5 0 010-6M13 9a5 5 0 000-6M2.500 11a8 8 0 010-10M15.500 11a8 8 0 000-10" stroke="#58e058" strokeWidth="1.500" /><rect x="11" y="11" width="6" height="6" fill="#e02020" /></> },
  { label: "McAfee", icon: mcafee },
  { label: "CM", text: "cm", box: "bg-[#e00010] text-white" },
  { label: "Action center", icon: <><path d="M3 2v15M4 3h11v7H4z" fill="#fff" stroke="#fff" /><circle cx="13" cy="13" r="4.500" fill="#e02020" /><path d="M11 11l4 4M15 11l-4 4" stroke="#fff" strokeWidth="1.500" /></> },
  { label: "Network", icon: <path d="M2 15v-2M5.500 15v-4M9 15V9M12.500 15V6M16 15V3" stroke="#999" strokeWidth="2" /> },
  { label: "Power", icon: <><rect x="2" y="3" width="9" height="13" stroke="#fff" strokeWidth="1.500" /><path d="M9.500 3v4M14.500 3v4" stroke="#fff" strokeWidth="1.500" /><path d="M7.500 7h9v3c0 2-2 3-3.500 3v4h-2v-4c-2 0-3.500-1-3.500-3z" fill="#fff" /></> },
  { label: "Volume", icon: <path d="M5 6h3l5-4v14l-5-4H5z" fill="#fff" /> },
];

const TextTile = ({ text, box, size }: { text: string; box?: string; size: string }) => (
  <span className={clsx("flex items-center justify-center font-bold", size, box)}>{text}</span>
);

function Taskbar() {
  return (
    <div className="relative flex h-7 items-center bg-linear-to-b from-[#3a3840] via-[#100f14] to-black">
      <button type="button" aria-label="Start" className="absolute bottom-0 left-2 z-10">
        <svg width="34" height="32" viewBox="0 0 34 32" aria-hidden>
          <defs>
            <radialGradient id="orb" cx="50%" cy="80%" r="80%">
              <stop offset="0" stopColor="#58d8f8" />
              <stop offset="0.600" stopColor="#1c68a0" />
              <stop offset="1" stopColor="#9cc8e0" />
            </radialGradient>
          </defs>
          <circle cx="17" cy="16" r="16" fill="url(#orb)" stroke="#30506a" />
          <path d="M9 9c3-2 5-1 7 0l-1.500 6.500c-2-1-4-1.500-7 0z" fill="#f06028" />
          <path d="M17 9.500c3 1.500 5 1 8-.5l-2 7c-3 1.500-5 1.500-7.500 0z" fill="#8cc830" />
          <path d="M7 17c3-1.500 5-1 7 0l-1.500 6.500c-2-1-4-1.500-7 0z" fill="#38a0e8" />
          <path d="M15.500 17.500c3 1.500 5 1 7.500-.5l-2 7c-3 1.500-4.500 1-7 0z" fill="#f8c828" />
        </svg>
      </button>
      <div className="flex h-full items-center pl-[54px]">
        {APPS.map((a) => (
          <button
            key={a.label}
            type="button"
            aria-label={a.label}
            className={clsx(
              "mx-[2px] flex h-[26px] w-[39px] shrink-0 items-center justify-center rounded-sm",
              a.state && "border border-[#999]",
              a.state === "open" && "bg-linear-to-b from-[#888] to-[#222]",
              a.state === "bright" && "bg-linear-to-b from-[#c8c8c8] to-[#777]"
            )}
          >
            {a.text ? <TextTile text={a.text} box={a.box} size="h-4 w-4 text-[9px]" /> : <Svg size={16}>{a.icon}</Svg>}
          </button>
        ))}
      </div>
      <div className="ml-auto flex h-full items-center text-white">
        {TRAY.map((t) => (
          <button key={t.label} type="button" aria-label={t.label} className="flex w-[22px] shrink-0 justify-center">
            {t.text ? <TextTile text={t.text} box={t.box} size="h-[14px] w-4 text-[7px]" /> : <Svg size={15}>{t.icon}</Svg>}
          </button>
        ))}
        <time className="w-[62px] pl-1 text-center font-['Noto_Sans',sans-serif] text-[12px]">14:01</time>
        <button type="button" aria-label="Show desktop" className="mr-[2px] h-[26px] w-[11px] border border-[#777] bg-linear-to-b from-[#444] to-black" />
      </div>
    </div>
  );
}

export default function App() {
  return (
    <main className={clsx("overflow-hidden bg-white pt-[42px] text-black", UI_FONT)}>
      <Toolbar />
      <Chart />
      <ChartTabs />
      <Terminal />
      <StatusBar />
      <Taskbar />
    </main>
  );
}
